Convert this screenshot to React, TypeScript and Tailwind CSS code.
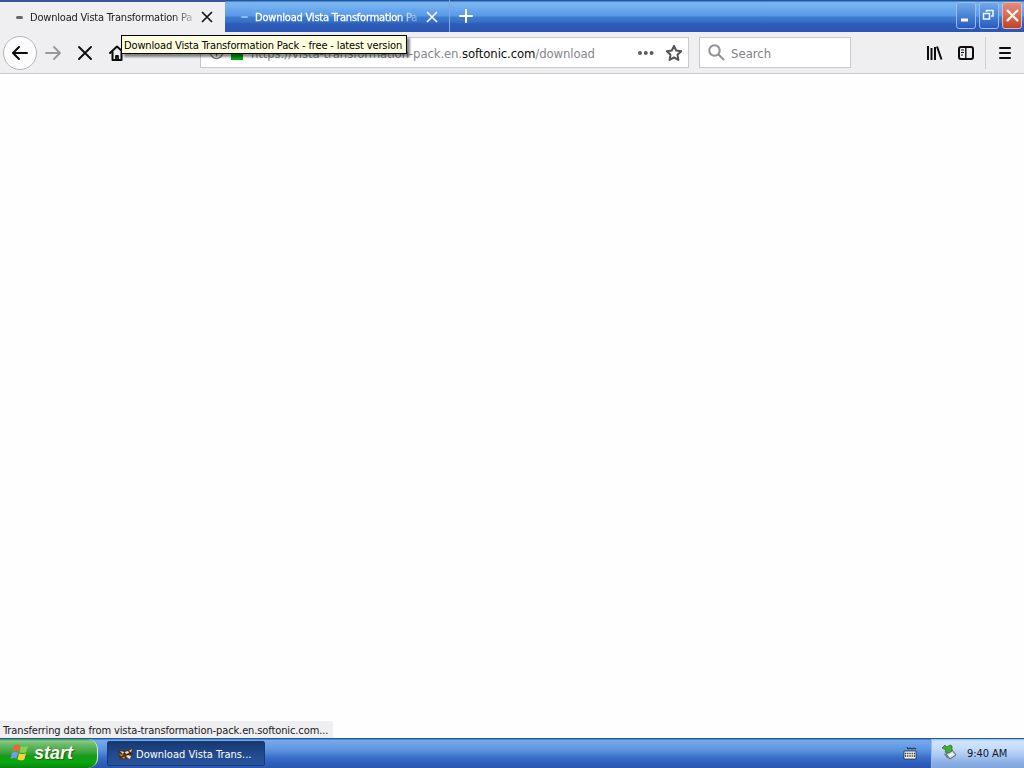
import React from 'react';

const ui = "font-['DejaVu_Sans_Condensed','DejaVu_Sans',sans-serif] [font-stretch:condensed]";

function Cross({ color, size, weight = 2 }: { color: string; size: number; weight?: number }) {
  return (
    <svg width={size} height={size} viewBox="0 0 16 16" fill="none" stroke={color} strokeWidth={weight} strokeLinecap="round">
      <path d="M2 2l12 12M14 2L2 14" />
    </svg>
  );
}

function TitleBar() {
  return (
    <header className="flex h-8 shrink-0 bg-[linear-gradient(180deg,#174b8c_0px,#245fa9_1px,#79b3ee_2px,#78b3f0_5px,#65a3ec_11px,#5998e5_16px,#3e7dd0_17px,#3670c5_22px,#2c5cb7_24px,#2b55b4_32px)]">
      <div className="flex h-8 w-[225px] shrink-0 items-center border-t-2 border-[#3c539d] bg-[#efeef0]">
        <span className="ml-4 h-[3px] w-[7px] rounded-full bg-[#66666b]" />
        <span className="ml-[7px] w-[163px] overflow-hidden whitespace-nowrap pt-0.5 text-[11px] tracking-[-0.2px] text-[#202024] [mask-image:linear-gradient(90deg,#000_143px,transparent_169px)]">Download Vista Transformation Pa</span>
        <span className="ml-2"><Cross color="#151515" size={12} weight={2.3} /></span>
      </div>
      <div className="flex w-[225px] shrink-0 items-center border-r border-[#79a9e8] pt-0.5">
        <span className="ml-4 h-[2px] w-[7px] rounded-full bg-[#8abaf2]" />
        <span className="ml-[7px] w-[163px] overflow-hidden whitespace-nowrap pt-0.5 text-[11px] tracking-[-0.2px] text-white [-webkit-text-stroke:0.3px_white] [mask-image:linear-gradient(90deg,#000_143px,transparent_169px)]">Download Vista Transformation Pa</span>
        <span className="ml-2"><Cross color="#f4faff" size={12} weight={2.3} /></span>
      </div>
      <div className="flex w-8 items-center justify-center">
        <svg width="14" height="14" viewBox="0 0 14 14" stroke="white" strokeWidth="2" strokeLinecap="round"><path d="M7 1v12M1 7h12" /></svg>
      </div>
      <div className="ml-auto flex gap-[3px] pr-0.5 pt-0.5">
        <div className="h-[27px] w-5 rounded-[3px] border border-[#9dbdf0] bg-linear-to-b from-[#72a9e9] to-[#275bc0]">
          <svg width="18" height="25" viewBox="0 0 18 25"><path d="M4 15.500h7v3H4z" fill="white" /></svg>
        </div>
        <div className="h-[27px] w-5 rounded-[3px] border border-[#9dbdf0] bg-linear-to-b from-[#72a9e9] to-[#275bc0]">
          <svg width="18" height="25" viewBox="0 0 18 25" fill="none" stroke="#e9f7ff"><path d="M3.500 10.500h6v5.500h-6z" strokeWidth="1.5" /><path d="M6.500 9V7.500h6.500V13h-2" strokeWidth="1.5" /></svg>
        </div>
        <div className="flex h-[27px] w-5 items-center justify-center rounded-[3px] border border-[#e9b5b5] bg-linear-to-b from-[#df8c83] via-[#d76a55] to-[#bd4427]">
          <Cross color="#fff3e8" size={13} weight={2.8} />
        </div>
      </div>
    </header>
  );
}

function Toolbar() {
  return (
    <div className="flex h-[42px] shrink-0 items-center border-b border-[#c9c9cb] bg-[#efeef0]">
      <div className="ml-[3px] flex size-[34px] shrink-0 items-center justify-center rounded-full border border-[#b6b6b8] bg-[#fcfcfc]">
        <svg width="18" height="16" viewBox="0 0 18 16" fill="none" stroke="#0c0c0d" strokeWidth="2" strokeLinecap="round" strokeLinejoin="round"><path d="M16 8H2M8 2L2 8l6 6" /></svg>
      </div>
      <svg className="ml-2 shrink-0" width="17" height="16" viewBox="0 0 17 16" fill="none" stroke="#98989b" strokeWidth="1.9" strokeLinecap="round" strokeLinejoin="round"><path d="M1 8h14M9 2l6 6-6 6" /></svg>
      <span className="ml-[15px] shrink-0"><Cross color="#0c0c0d" size={16} weight={1.9} /></span>
      <svg className="ml-4 shrink-0" width="16" height="16" viewBox="0 0 16 16" fill="none" stroke="#0c0c0d" strokeWidth="2" strokeLinejoin="round" strokeLinecap="round"><path d="M1 8l7-6.500L15 8M3.500 7v8h9V7" /><path d="M7 15v-4h2v4" strokeWidth="1.8" /></svg>
      <div className="ml-[75px] flex h-[31px] w-[489px] shrink-0 items-center border border-[#c9c9cc] bg-white">
        <svg className="ml-2 shrink-0" width="15" height="15" viewBox="0 0 15 15" fill="none" stroke="#77777a" strokeWidth="1.3"><circle cx="7.5" cy="7.5" r="6" /><path d="M7.500 6.500v5M7.500 3.500v1.500" /></svg>
        <span className="ml-[7px] h-3.5 w-3 shrink-0 bg-[#05a20b]" />
        <span className="ml-2 w-[380px] shrink-0 whitespace-nowrap pt-0.5 text-[13px] tracking-[-0.11px] text-[#85858a]">https://vista-transformation-pack.en.<span className="text-[#0c0c0d]">softonic.com</span>/download</span>
        <svg className="ml-[6px] shrink-0" width="17" height="6" viewBox="0 0 17 6" fill="#5c5c5f"><circle cx="3" cy="3" r="2" /><circle cx="8.800" cy="3" r="2" /><circle cx="14.600" cy="3" r="2" /></svg>
        <svg className="ml-[11px] shrink-0" width="18" height="18" viewBox="0 0 18 18" fill="none" stroke="#555559" strokeWidth="2" strokeLinejoin="round"><path d="M9 1.800l2.200 4.700 5 .7-3.700 3.500.9 5.200L9 13.500l-4.400 2.400.9-5.200-3.700-3.500 5-.7z" /></svg>
      </div>
      <div className="ml-2.5 flex h-[31px] w-[152px] shrink-0 items-center border border-[#c9c9cc] bg-white">
        <svg className="ml-2" width="17" height="17" viewBox="0 0 17 17" fill="none" stroke="#929295" strokeWidth="2" strokeLinecap="round"><circle cx="6.500" cy="6.500" r="5.200" /><path d="M10.500 10.500l5 5" /></svg>
        <span className="ml-1.5 pt-0.5 text-[13px] text-[#818184]">Search</span>
      </div>
      <svg className="ml-[75px] shrink-0" width="17" height="16" viewBox="0 0 17 16" fill="none" stroke="#0c0c0d" strokeWidth="2"><path d="M2 1v14M5.500 3v12M9 2v13M11 1.500l4.500 13" /></svg>
      <svg className="ml-[14px] shrink-0" width="18" height="16" viewBox="0 0 18 16" fill="none" stroke="#0c0c0d" strokeWidth="2"><rect x="2" y="2" width="14" height="12" rx="2" /><path d="M8.800 2v12" strokeWidth="1.4" /><path d="M4 5h3M4 7.500h3M4 10h2" strokeWidth="1" /></svg>
      <div className="ml-[10px] h-8 w-px bg-[#d0d0d2]" />
      <svg className="ml-3 shrink-0" width="14" height="14" viewBox="0 0 14 14" stroke="#0c0c0d" strokeWidth="2" strokeLinecap="round"><path d="M2 2h10M2 7h10M2 12h10" /></svg>
    </div>
  );
}

function WindowsFlag() {
  return (
    <svg width="19" height="19" viewBox="0 0 19 19">
      <path d="M4 3q3-2.500 6-.6L8.500 8.600Q5.500 7 2.300 9z" fill="#ee6531" />
      <path d="M11 3q3 1.700 7-.2L16.200 9q-3 1.800-6.800.2z" fill="#8bd24a" />
      <path d="M2 10q3-2.300 6-.5l-1.500 6.200Q3.500 14 .5 16z" fill="#6b9cf0" />
      <path d="M9 10.200q3 1.800 7 0l-1.700 6.200q-3 1.800-6.800.1z" fill="#fbd23c" />
    </svg>
  );
}

function Taskbar() {
  return (
    <footer className="flex h-[30px] shrink-0 bg-[linear-gradient(180deg,#164a86_0px,#2f67b5_1px,#75a8ea_2px,#6fa5e8_5px,#5c93df_12px,#4f86d8_15px,#3b70c9_19px,#2f5fbd_25px,#2b55ae_30px)]">
      <div className="mt-px flex w-[98px] items-center rounded-r-[10px] border-r border-[#d4edc8] bg-[linear-gradient(180deg,#3f8b46_0px,#87ca83_2px,#68b867_6px,#41a442_13px,#159b18_17px,#08a90c_23px,#0a8412_29px)]">
        <span className="ml-[10px] pb-0.5"><WindowsFlag /></span>
        <span className="ml-[5px] pb-px font-['Liberation_Sans',Arial,sans-serif] text-[18px] font-bold italic leading-none text-[#fbfff0] [font-stretch:normal] [text-shadow:1px_1px_1px_#245b24]">start</span>
      </div>
      <div className="ml-[9px] mt-[3px] flex h-[25px] w-[158px] items-center rounded-[2px] border border-[#173a76] bg-linear-to-b from-[#16396f] via-[#21498c] to-[#26539d]">
        <svg className="ml-[10px] shrink-0" width="16" height="14" viewBox="0 0 16 14">
          <path d="M0 4l5-1 2 1 3-1 5-3-1 5 1 3-3 4-3-1-2 2-3-1-3 1 1-3-3-1 2-2z" fill="#4a3524" />
          <path d="M2 4l4 1-1 2zM7 5l3-1 1 2-3 1zM11 4l3-2-1 3zM8 9l2-1 3 1-1 3-2-1z" fill="#f3dfb6" />
          <path d="M1 7l5 1-3 1zM4 10l3 0-1 2z" fill="#d99545" /><path d="M9 7h2v1H9zM12 6h1v1h-1z" fill="#111" />
        </svg>
        <span className="ml-0.5 whitespace-nowrap pt-[3px] text-[11px] tracking-[0.01px] text-white">Download Vista Trans...</span>
      </div>
      <svg className="ml-auto mr-[14px] mt-[8px]" width="14" height="15" viewBox="0 0 14 15">
        <path d="M4 1l1 2 2-1 2 1 2-1 2 1" fill="none" stroke="#10274f" />
        <path d="M1 5h12v8H1z" fill="#f7f7f0" stroke="#172b46" strokeWidth=".8" />
        <path d="M2 7.500h10M2 10h10" stroke="#222" strokeWidth="1.300" strokeDasharray="1.200 1" />
      </svg>
      <div className="mt-px flex w-[93px] items-center border-l border-[#91bdf1] bg-[linear-gradient(180deg,#91b7eb_0px,#d0e4fc_2px,#c5dcfa_9px,#acc9f2_16px,#8cafe5_23px,#82a4dc_29px)]">
        <svg className="mb-1 ml-[10px]" width="15" height="16" viewBox="0 0 15 16">
          <path d="M4 10l6-4 4 5-6 4z" fill="#cbd5d8" stroke="#59636d" /><path d="M6 11l4-2.500 2 2-4 2.500z" fill="#eef3ef" /><path d="M3 9l5 6-3-1-3-4z" fill="#687b83" />
          <path d="M0 4l3-3 2 2 3-2 2 1v5L7 9 3 8l1-2z" fill="#42ae39" stroke="#236b25" strokeWidth=".7" />
        </svg>
        <span className="ml-[10px] whitespace-nowrap pt-0.5 text-[11px] tracking-[-0.05px] text-[#101827]">9:40 AM</span>
      </div>
    </footer>
  );
}

export default function App() {
  return (
    <div className={`${ui} relative flex h-[768px] w-[1024px] flex-col overflow-hidden bg-white`}>
      <TitleBar />
      <Toolbar />
      <main className="flex flex-1 items-end bg-[#fefefe]">
        <div className="flex h-[17px] w-[333px] items-center bg-[#efeef0] pl-[3px] pt-[3px] text-[11px] tracking-[-0.11px] text-[#202024]"><span className="whitespace-nowrap">Transferring data from vista-transformation-pack.en.softonic.com...</span></div>
      </main>
      <Taskbar />
      <div className="absolute left-[121px] top-[35px] flex h-[19px] w-[286px] items-center whitespace-nowrap border border-black bg-[#ffffe1] pl-0.5 pt-[3px] text-[11px] tracking-[-0.14px] text-black shadow-[3px_3px_2px_rgba(0,0,0,0.45)]">Download Vista Transformation Pack - free - latest version</div>
    </div>
  );
}
